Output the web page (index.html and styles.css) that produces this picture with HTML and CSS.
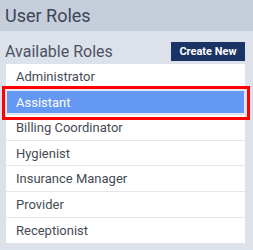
FILE: index.html
```html
<!DOCTYPE html>
<html>
<head>
<meta charset="utf-8">
<link rel="stylesheet" href="styles.css">
</head>
<body>
<div class="panel">
  <div class="header">User Roles</div>
  <div class="toolbar">
    <span class="subtitle">Available Roles</span>
    <button class="btn">Create New</button>
  </div>
  <ul class="list">
    <li class="row">Administrator</li>
    <li class="row selected">Assistant</li>
    <li class="row">Billing Coordinator</li>
    <li class="row">Hygienist</li>
    <li class="row">Insurance Manager</li>
    <li class="row">Provider</li>
    <li class="row">Receptionist</li>
  </ul>
</div>
</body>
</html>
```
FILE: styles.css
```css
html, body {
  margin: 0;
  padding: 0;
  background: #dde1ea;
}
.panel {
  width: 253px;
  height: 250px;
  background: #dde1ea;
  font-family: Roboto, "Liberation Sans", sans-serif;
}
.header {
  height: 31px;
  background: #c6cedb;
  color: #3b4556;
  font-size: 18px;
  line-height: 31px;
  padding-left: 5px;
  box-sizing: border-box;
}
.toolbar {
  display: flex;
  justify-content: space-between;
  align-items: center;
  padding: 7px 8px 0 5px;
  height: 26px;
}
.subtitle {
  font-size: 16px;
  color: #4a5363;
}
.btn {
  width: 74px;
  height: 19px;
  background: #1b3465;
  color: #fff;
  border: 0;
  padding: 0;
  font-family: Roboto, "Liberation Sans", sans-serif;
  font-weight: bold;
  font-size: 11px;
}
.list {
  list-style: none;
  margin: 0 8px 0 6px;
  padding: 0;
  background: #fff;
}
.row {
  height: 25.6px;
  line-height: 25px;
  padding-left: 10px;
  font-size: 13px;
  color: #454b55;
  box-sizing: border-box;
  border-bottom: 1px solid #e3e6ec;
  position: relative;
}
.row:last-child {
  border-bottom: 0;
}
.row.selected {
  background: #6598f2;
  color: #fff;
  box-shadow: inset 0 0 0 1px #dfe8f8;
}
.row.selected::after {
  content: "";
  position: absolute;
  left: -4px;
  right: -5px;
  top: -4px;
  bottom: -6px;
  border: 3px solid #ff0000;
}
```
